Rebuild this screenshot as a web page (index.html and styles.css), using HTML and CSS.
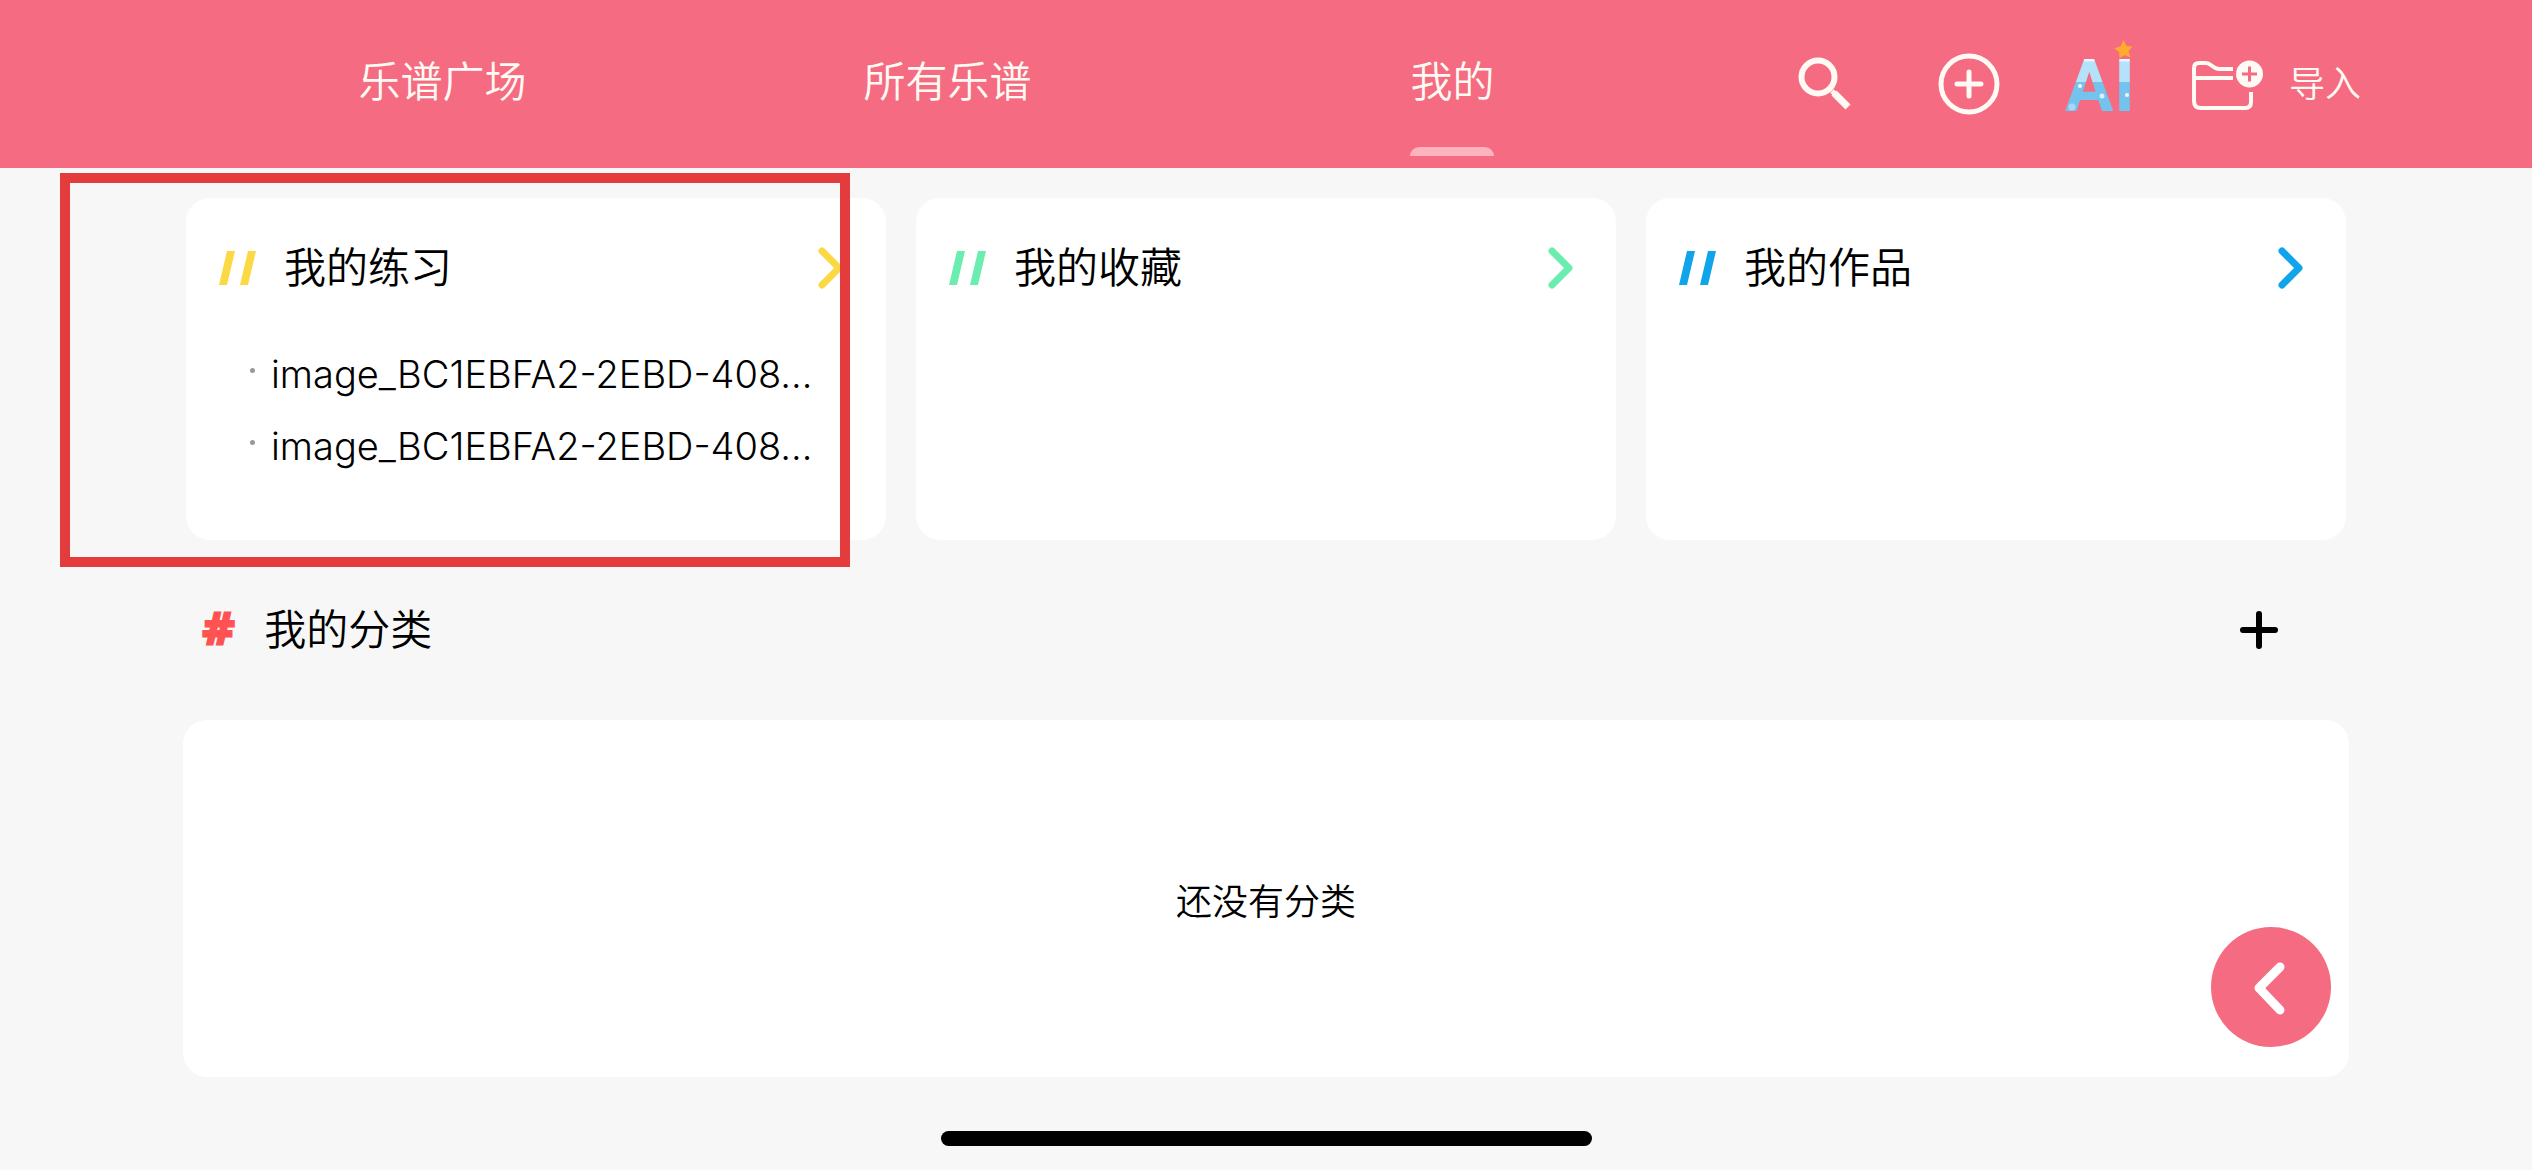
FILE: index.html
```html
<!DOCTYPE html>
<html lang="zh-CN">
<head>
  <meta charset="UTF-8" />
  <meta name="viewport" content="width=device-width, initial-scale=1.0"/>
  <title>我的</title>
  <link rel="stylesheet" href="styles.css">
</head>
<body>

<header class="topbar">
  <nav class="tabs">
    <a href="#square" class="tab">乐谱广场</a>
    <a href="#all" class="tab">所有乐谱</a>
    <a href="#mine" class="tab active" aria-current="page">我的</a>
  </nav>
  <div class="actions">
    <button class="icon-btn search-btn" aria-label="搜索">
      <svg width="64" height="64" viewBox="0 0 64 64" fill="none" stroke="#fffaf3">
        <circle cx="25" cy="25" r="16.5" stroke-width="6"/>
        <path d="M39 39L43 43" stroke-width="5"/>
        <path d="M41 41L55 55" stroke-width="7"/>
      </svg>
    </button>
    <button class="icon-btn" aria-label="新建">
      <svg width="64" height="64" viewBox="0 0 64 64" fill="none" stroke="#fffaf3" stroke-linecap="round">
        <circle cx="32" cy="32" r="28" stroke-width="5"/>
        <path d="M20 32H44M32 20V44" stroke-width="5"/>
      </svg>
    </button>
    <button class="icon-btn" aria-label="AI">
      <svg width="78" height="88" viewBox="-3 0 78 88">
        <defs>
          <linearGradient id="water" gradientUnits="userSpaceOnUse" x1="0" y1="20" x2="0" y2="71">
            <stop offset="0" stop-color="#f0faff"/>
            <stop offset="0.05" stop-color="#b4e2fb"/>
            <stop offset="0.43" stop-color="#b4e2fb"/>
            <stop offset="0.43" stop-color="#74c2ee"/>
            <stop offset="1" stop-color="#74c2ee"/>
          </linearGradient>
        </defs>
        <text class="ai-text" x="5" y="71" fill="url(#water)">A</text>
        <text class="ai-text" x="54" y="71" fill="url(#water)">I</text>
        <circle cx="20" cy="46" r="2" fill="#f0faff"/>
        <circle cx="42" cy="56" r="2.5" fill="#d9f1ff"/>
        <circle cx="12" cy="67" r="3.5" fill="#a9d6fa"/>
        <circle cx="67" cy="55" r="2" fill="#f0faff"/>
        <path d="M63.500 0l3 6 6 .5-4 4.800 2 6.200-6-2.500-5 3.200-.3-6.200-5-3.800 6.300-1.700z" fill="#ffac2d"/>
      </svg>
    </button>
    <button class="icon-btn import-btn">
      <svg width="72" height="56" viewBox="0 0 72 56" fill="none" stroke="#fffaf3" stroke-width="4">
        <path d="M42 13H28C22 13 20 7 15 7H8Q3 7 3 12V45Q3 52 10 52H54Q60 52 60 46V36M3 22H42"/>
        <circle cx="58.500" cy="18" r="13.500" fill="#fffaf3" stroke="none"/>
        <path d="M51 18H66M58.500 10.500V25.500" stroke="#f56b81" stroke-width="3"/>
      </svg>
      <span>导入</span>
    </button>
  </div>
</header>

<main class="content">
  <div class="cards">
    <section class="card practice">
      <a href="#practice" class="card-head">
        <svg class="slashes" width="38" height="34" viewBox="0 0 38 34" fill="currentColor"><path d="M9 0h8L9 34H1zM30 0h8l-8 34h-8z"/></svg>
        <h2>我的练习</h2>
        <svg class="arrow" width="26" height="42" viewBox="0 0 26 42" fill="none" stroke="currentColor" stroke-width="7" stroke-linecap="round" stroke-linejoin="round"><path d="M4 4L21 21L4 38"/></svg>
      </a>
      <ul class="files">
        <li><a href="#file1">image_BC1EBFA2-2EBD-408…</a></li>
        <li><a href="#file2">image_BC1EBFA2-2EBD-408…</a></li>
      </ul>
      <div class="highlight"></div>
    </section>
    <section class="card favorite">
      <a href="#favorite" class="card-head">
        <svg class="slashes" width="38" height="34" viewBox="0 0 38 34" fill="currentColor"><path d="M9 0h8L9 34H1zM30 0h8l-8 34h-8z"/></svg>
        <h2>我的收藏</h2>
        <svg class="arrow" width="26" height="42" viewBox="0 0 26 42" fill="none" stroke="currentColor" stroke-width="7" stroke-linecap="round" stroke-linejoin="round"><path d="M4 4L21 21L4 38"/></svg>
      </a>
    </section>
    <section class="card works">
      <a href="#works" class="card-head">
        <svg class="slashes" width="38" height="34" viewBox="0 0 38 34" fill="currentColor"><path d="M9 0h8L9 34H1zM30 0h8l-8 34h-8z"/></svg>
        <h2>我的作品</h2>
        <svg class="arrow" width="26" height="42" viewBox="0 0 26 42" fill="none" stroke="currentColor" stroke-width="7" stroke-linecap="round" stroke-linejoin="round"><path d="M4 4L21 21L4 38"/></svg>
      </a>
    </section>
  </div>

  <div class="section-head">
    <span class="hash">#</span>
    <h2>我的分类</h2>
    <button class="icon-btn add-btn" aria-label="添加分类">
      <svg width="40" height="40" viewBox="0 0 40 40" stroke="#000" stroke-width="6" stroke-linecap="round"><path d="M4 20H36M20 4V36"/></svg>
    </button>
  </div>

  <section class="panel">
    <p>还没有分类</p>
    <button class="fab" aria-label="返回">
      <svg width="60" height="60" viewBox="0 0 60 60" fill="none" stroke="#fff" stroke-width="9" stroke-linecap="round" stroke-linejoin="round"><path d="M39 10L18 31L39 53"/></svg>
    </button>
  </section>
</main>

<footer class="home">
  <div class="home-bar"></div>
</footer>

</body>
</html>
```
FILE: styles.css
```css
* { box-sizing: border-box; }
body {
  font-family: Inter, "Noto Sans CJK SC", sans-serif;
  font-weight: 350;
  margin: 0;
  min-height: 100vh;
  background: #f7f7f7;
  color: #000;
  display: flex;
  flex-direction: column;
}
a {
  color: inherit;
  text-decoration: none;
}
h2 {
  margin: 0;
  font-size: 42px;
  line-height: 60px;
  font-weight: 350;
  color: #000;
}
svg { display: block; }

.topbar {
  display: flex;
  align-items: stretch;
  gap: 88px;
  height: 168px;
  padding: 0 171px 0 190px;
  background: #f56b81;
  color: #fffaf3;
}
.tabs {
  flex: 1;
  display: grid;
  grid-template-columns: repeat(3, 1fr);
  justify-items: center;
}
.tab {
  position: relative;
  padding-top: 52px;
  font-size: 42px;
  line-height: 60px;
}
.tab.active::after {
  content: "";
  position: absolute;
  left: 0;
  right: 0;
  bottom: 12px;
  height: 9px;
  border-radius: 9px 9px 0 0;
  background: #fbb4bd;
}
.actions {
  display: flex;
  align-items: center;
  gap: 56px;
}
.icon-btn {
  padding: 0;
  border: none;
  background: none;
  color: inherit;
  cursor: pointer;
}
.search-btn { margin-right: 24px; }
.import-btn {
  display: flex;
  align-items: center;
  gap: 26px;
  font: inherit;
  font-size: 36px;
  line-height: 52px;
}
.ai-text {
  font-family: Roboto, sans-serif;
  font-size: 72px;
  font-weight: 700;
}

.content {
  flex: 1;
  display: flex;
  flex-direction: column;
  padding: 30px 183px 0;
}
.cards {
  display: grid;
  grid-template-columns: repeat(3, 1fr);
  gap: 30px;
  padding: 0 3px;
}
.card {
  position: relative;
  min-height: 342px;
  padding: 40px 42px 40px 32px;
  border-radius: 24px;
  background: #fff;
}
.card-head {
  display: flex;
  align-items: center;
  gap: 28px;
}
.arrow { margin-left: auto; }
.practice { color: #fbd945; }
.favorite { color: #6cedb0; }
.works { color: #10a4ea; }
.files {
  list-style: none;
  margin: 40px 0 0;
  padding: 0 0 0 32px;
  color: #000;
  font-size: 38px;
  font-weight: 300;
  line-height: 72px;
}
.files li {
  display: flex;
  align-items: center;
  gap: 16px;
}
.files li::before {
  content: "";
  width: 5px;
  height: 5px;
  margin-bottom: 8px;
  border-radius: 50%;
  background: #999;
}
/* red frame laid over the practice card */
.highlight {
  position: absolute;
  top: -25px;
  right: 36px;
  bottom: -27px;
  left: -126px;
  border: 10px solid #e43c3d;
  pointer-events: none;
}

.section-head {
  display: flex;
  align-items: center;
  gap: 28px;
  height: 180px;
  padding: 0 70px 0 18px;
}
.hash {
  color: #ff5353;
  font-family: "DejaVu Sans", sans-serif;
  font-size: 42px;
  line-height: 60px;
  font-weight: 700;
  -webkit-text-stroke: 3px #ff5353;
}
.add-btn { margin-left: auto; }

.panel {
  position: relative;
  flex: 1;
  display: flex;
  align-items: center;
  justify-content: center;
  min-height: 240px;
  padding-top: 6px;
  border-radius: 24px;
  background: #fff;
}
.panel p {
  margin: 0;
  font-size: 36px;
  line-height: 52px;
}
.fab {
  position: absolute;
  right: 18px;
  bottom: 30px;
  display: flex;
  align-items: center;
  justify-content: center;
  width: 120px;
  height: 120px;
  padding: 0;
  border: none;
  border-radius: 50%;
  background: #f56b81;
  cursor: pointer;
}

.home {
  display: flex;
  justify-content: center;
  padding: 54px 0 24px;
}
.home-bar {
  width: 651px;
  max-width: 60%;
  height: 15px;
  border-radius: 8px;
  background: #000;
}
```
